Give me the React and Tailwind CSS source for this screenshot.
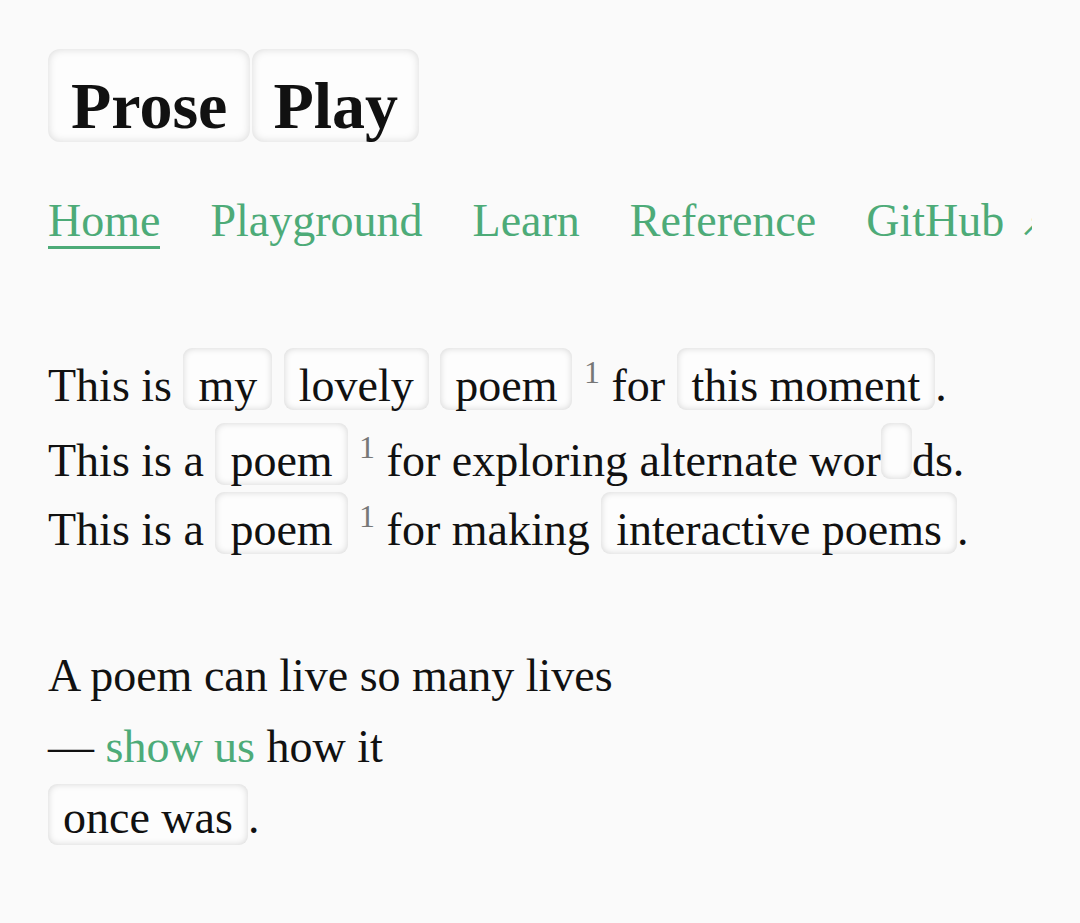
import React from "react";

const boxBase =
  "inline-block rounded-[9px] bg-[#fdfdfd] shadow-[inset_0_0_7px_rgba(0,0,0,0.17)] px-[15px] leading-none";

function Box({ children, variant = "a" }) {
  const pad = variant === "a" ? "pt-[15px] pb-[1px]" : "pt-[11px] pb-[4px]";
  return <span className={`${boxBase} ${pad}`}>{children}</span>;
}

function Sup() {
  return (
    <span className="relative top-[-18px] text-[32px] text-[#777]">1</span>
  );
}

function EmptyBox() {
  return (
    <span className="relative top-[3px] inline-block h-[56px] w-[31px] rounded-[9px] bg-[#fdfdfd] align-baseline shadow-[inset_0_0_7px_rgba(0,0,0,0.17)]" />
  );
}

export default function App() {
  const green = "text-[#4dab78]";
  return (
    <div className="min-h-[923px] w-[1080px] overflow-hidden bg-[#fafafa] pl-[48px] pt-[49px] font-['Liberation_Serif',serif] text-[46px] text-[#111]">
      <h1 className="flex gap-[2px] text-[66px] font-bold leading-none">
        <span className="rounded-[12px] bg-[#fdfdfd] px-[23px] pb-[3px] pt-[24px] shadow-[inset_0_0_8px_rgba(0,0,0,0.15)]">
          Prose
        </span>
        <span className="rounded-[12px] bg-[#fdfdfd] px-[21px] pb-[3px] pt-[24px] shadow-[inset_0_0_8px_rgba(0,0,0,0.15)]">
          Play
        </span>
      </h1>

      <nav className={`mt-[46px] flex w-[984px] items-start gap-[50px] overflow-hidden whitespace-nowrap pb-[12px] pt-[10px] leading-none ${green}`}>
        <span className="border-b-[3px] border-[#4dab78] pb-[2px]">Home</span>
        <span>Playground</span>
        <span>Learn</span>
        <span>Reference</span>
        <span>
          GitHub<span className="ml-[16px] text-[30px]">↗</span>
        </span>
      </nav>

      <div className="mt-[87px] whitespace-nowrap">
        <div className="h-[72px] leading-[72px]">
          This is <Box>my</Box> <Box>lovely</Box> <Box>poem</Box> <Sup /> for{" "}
          <Box>this moment</Box>.
        </div>
        <div className="h-[72px] leading-[72px]">
          This is a <Box>poem</Box> <Sup /> for exploring alternate wor
          <EmptyBox />
          ds.
        </div>
        <div className="h-[72px] leading-[72px]">
          This is a <Box>poem</Box> <Sup /> for making{" "}
          <Box>interactive poems</Box>.
        </div>
      </div>

      <div className="mt-[76px] whitespace-nowrap">
        <div className="h-[71px] leading-[71px]">A poem can live so many lives</div>
        <div className="h-[71px] leading-[71px]">
          — <span className={green}>show us</span> how it
        </div>
        <div className="h-[71px] leading-[71px]">
          <Box variant="b">once was</Box>.
        </div>
      </div>
    </div>
  );
}
